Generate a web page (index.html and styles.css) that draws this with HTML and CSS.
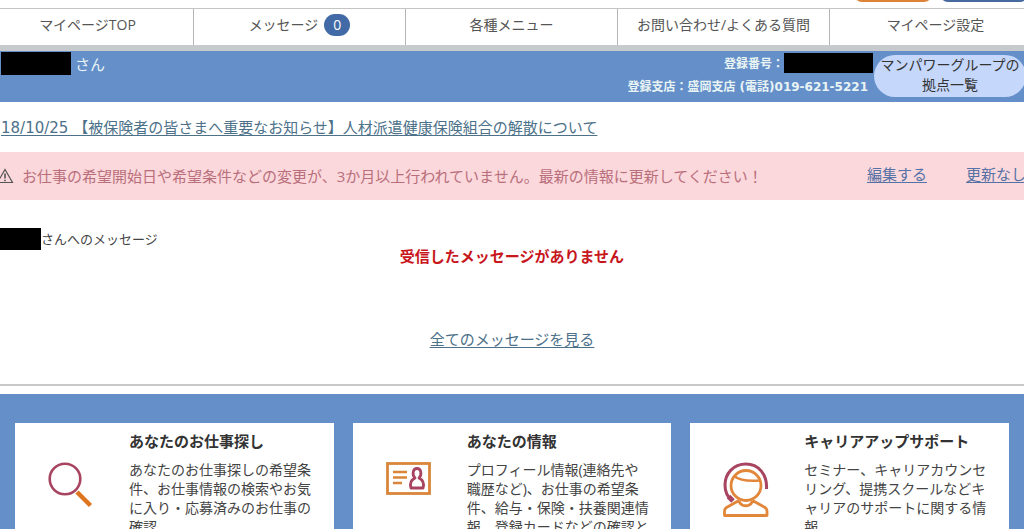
FILE: index.html
```
<!DOCTYPE html>
<html lang="ja">
<head>
  <meta charset="UTF-8">
  <meta name="viewport" content="width=device-width, initial-scale=1.0">
  <title>マイページ</title>
  <link rel="stylesheet" href="styles.css">
</head>
<body>
  <div class="top-buttons">
    <button class="top-button orange" type="button"></button>
    <button class="top-button navy" type="button"></button>
  </div>

  <nav class="main-nav">
    <a href="#">マイページTOP</a>
    <a href="#">メッセージ<span class="badge">0</span></a>
    <a href="#">各種メニュー</a>
    <a href="#">お問い合わせ/よくある質問</a>
    <a href="#">マイページ設定</a>
  </nav>

  <header class="user-bar">
    <div class="user-name"><span class="mask mask-name"></span>さん</div>
    <div class="user-info">
      <p class="user-number">登録番号：<span class="mask mask-number"></span></p>
      <p>登録支店：盛岡支店 (電話)019-621-5221</p>
    </div>
    <a class="branch-link" href="#">マンパワーグループの<br>拠点一覧</a>
  </header>

  <main>
    <div class="news">
      <a href="#">18/10/25 【被保険者の皆さまへ重要なお知らせ】人材派遣健康保険組合の解散について</a>
    </div>

    <div class="alert">
      <svg class="alert-icon" viewBox="0 0 18 16" fill="none" stroke="#555">
        <path d="M9 1.5 L16.5 14.5 H1.5 Z" stroke-width="1.2"/>
        <path d="M9 5.5 V10.5 M9 11.8 V13.2" stroke-width="1.6"/>
      </svg>
      <p>お仕事の希望開始日や希望条件などの変更が、3か月以上行われていません。最新の情報に更新してください！</p>
      <div class="alert-links">
        <a href="#">編集する</a>
        <a href="#">更新なし</a>
      </div>
    </div>

    <section class="messages">
      <h2><span class="mask mask-message"></span>さんへのメッセージ</h2>
      <p class="empty">受信したメッセージがありません</p>
      <a href="#">全てのメッセージを見る</a>
    </section>

    <section class="cards">
      <div class="card">
        <div class="card-icon">
          <svg width="46" height="46" viewBox="0 0 46 46" fill="none">
            <path d="M29 30 L42.5 43.5" stroke="#dd7420" stroke-width="4.5"/>
            <circle cx="17" cy="17" r="15.3" stroke="#a84460" stroke-width="2.6"/>
          </svg>
        </div>
        <div class="card-text">
          <h3>あなたのお仕事探し</h3>
          <p>あなたのお仕事探しの希望条件、お仕事情報の検索やお気に入り・応募済みのお仕事の確認</p>
        </div>
      </div>
      <div class="card">
        <div class="card-icon">
          <svg width="46" height="34" viewBox="0 0 46 34" fill="none">
            <rect x="1.5" y="1.5" width="42" height="30" stroke="#d9863a" stroke-width="2.8"/>
            <path d="M7 10 H21 M7 15.5 H21 M7 21 H16" stroke="#d9863a" stroke-width="2.6"/>
            <path d="M29 16 C26 13 26.5 6.5 31 6.5 C35.5 6.5 36 13 33 16 C37 18 38.5 21 37 26 H25 C23.500 21 25 18 29 16 Z" stroke="#a84460" stroke-width="2.8" stroke-linejoin="round"/>
          </svg>
        </div>
        <div class="card-text">
          <h3>あなたの情報</h3>
          <p>プロフィール情報(連絡先や職歴など)、お仕事の希望条件、給与・保険・扶養関連情報、登録カードなどの確認と変更</p>
        </div>
      </div>
      <div class="card">
        <div class="card-icon">
          <svg width="46" height="56" viewBox="0 0 46 56" fill="none">
            <path d="M43.5 27 C44.5 12 35 2 23 2 C10 2 2 12 2 23 C2 30 4.5 35 9 38.5" stroke="#a84460" stroke-width="3"/>
            <path d="M5.5 34.500 L10 39" stroke="#a84460" stroke-width="5"/>
            <circle cx="23" cy="23.5" r="15" stroke="#e2873a" stroke-width="2.8"/>
            <path d="M11 14 C16 18 25 19.500 37 18.500" stroke="#e2873a" stroke-width="2.6"/>
            <path d="M16 38.5 L3.500 45.5 C2 46.5 1.5 47.5 1.5 49 V53.5 H44 V49 C44 47.5 43.500 46.5 42 45.5 L29.5 38.5 M16 38.5 C17.5 45.500 28 45.5 29.5 38.5" stroke="#e2873a" stroke-width="2.8" stroke-linejoin="round"/>
          </svg>
        </div>
        <div class="card-text">
          <h3>キャリアアップサポート</h3>
          <p>セミナー、キャリアカウンセリング、提携スクールなどキャリアのサポートに関する情報</p>
        </div>
      </div>
    </section>
  </main>
</body>
</html>
```
FILE: styles.css
```
* {
  box-sizing: border-box;
}

body {
  margin: 0;
  font-family: "Open Sans", "Noto Sans CJK JP", sans-serif;
  font-size: 15px;
  line-height: 20px;
  color: #444;
  background: #fff;
  overflow-x: hidden;
}

h2, h3, p {
  margin: 0;
}

a {
  color: #4c7189;
  text-underline-offset: 2px;
}

.top-buttons {
  display: flex;
  justify-content: flex-end;
  align-items: flex-end;
  gap: 8px;
  height: 8px;
  padding-bottom: 6px;
  margin-right: -4px;
  overflow: hidden;
}

.top-button {
  flex: none;
  width: 78px;
  height: 30px;
  border: none;
  border-radius: 8px;
}

.orange {
  background: #dd8338;
}

.navy {
  width: 88px;
  background: #46699e;
}

.main-nav {
  display: grid;
  grid-template-columns: repeat(5, 1fr);
  margin: 0 -18px;
  border-top: 1px solid #c4c4c4;
  border-bottom: 6px solid #c6cacd;
}

.main-nav a {
  display: flex;
  justify-content: center;
  align-items: center;
  height: 36px;
  padding-bottom: 4px;
  border-right: 1px solid #b4b4b4;
  color: #555;
  font-size: 14px;
  text-decoration: none;
}

.badge {
  margin-left: 6px;
  width: 26px;
  border-radius: 12px;
  background: #416aa6;
  color: #fff;
  line-height: 22px;
  text-align: center;
}

.user-bar {
  display: flex;
  height: 51px;
  padding-left: 1px;
  background: #648fc9;
  color: #e8f4f4;
}

.mask {
  display: inline-block;
  background: #000;
}

.user-name {
  display: flex;
  gap: 4px;
  padding-top: 1px;
  line-height: 24px;
}

.mask-name {
  width: 70px;
  height: 23px;
}

.user-info {
  margin-left: auto;
  padding-top: 2px;
  padding-right: 5px;
  font-family: "DejaVu Sans", "Noto Sans CJK JP", sans-serif;
  font-size: 12px;
  font-weight: 700;
  line-height: 24px;
}

.user-number {
  display: flex;
  justify-content: flex-end;
  margin-right: -5px;
  line-height: 22px;
}

.mask-number {
  width: 89px;
  height: 20px;
}

.branch-link {
  flex: none;
  width: 152px;
  height: 42px;
  margin: 4px -2px 0 1px;
  border-radius: 21px;
  background: #c5d7fb;
  color: #333;
  font-size: 14px;
  text-align: center;
  text-decoration: none;
}

.news {
  padding: 16px 1px 14px;
  font-family: "DejaVu Sans", "Noto Sans CJK JP", sans-serif;
}

.alert {
  display: flex;
  align-items: center;
  height: 48px;
  margin-left: -4px;
  background: #fbd8dc;
  color: #b96f7b;
  white-space: nowrap;
}

.alert-icon {
  flex: none;
  width: 18px;
  height: 16px;
  margin-right: 8px;
}

.alert-links {
  display: flex;
  gap: 39px;
  margin-left: auto;
  margin-right: -2px;
  padding-bottom: 4px;
}

.alert-links a {
  color: #5571a5;
}

.messages {
  height: 186px;
  padding-top: 28px;
  border-bottom: 2px solid #c9c9cb;
  text-align: center;
}

.messages h2 {
  display: flex;
  font-size: 13px;
  font-weight: 400;
  line-height: 22px;
}

.mask-message {
  width: 41px;
  height: 22px;
}

.empty {
  margin: -4px 0 63px;
  color: #c8161d;
  font-weight: 700;
}

.cards {
  display: grid;
  grid-template-columns: repeat(3, 1fr);
  gap: 19px;
  margin-top: 8px;
  padding: 29px 15px;
  background: #648fc9;
}

.card {
  display: flex;
  padding: 8px 20px 20px 33px;
  background: #fff;
}

.card-icon {
  flex: none;
  width: 81px;
  padding-top: 31px;
}

.card h3 {
  margin-bottom: 9px;
  color: #333;
  font-size: 15px;
}

.card p {
  font-size: 14px;
  line-height: 19px;
}
```
